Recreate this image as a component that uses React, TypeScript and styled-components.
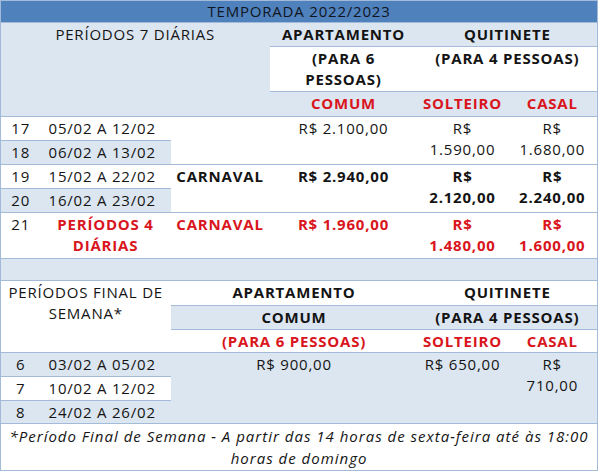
import React from 'react'
import styled, { createGlobalStyle, css } from 'styled-components'

const GlobalStyle = createGlobalStyle`
  html, body {
    margin: 0;
    padding: 0;
    background: #ffffff;
  }
`

const LINE = '#a3bbd8'
const BAND = '#dce6f1'
const TITLE = '#4f81bd'
const RED = '#d9151d'

const Sheet = styled.table`
  border-collapse: collapse;
  table-layout: fixed;
  width: 597px;
  border: 1px solid ${LINE};
  font-family: 'Open Sans', 'Liberation Sans', sans-serif;
  font-size: 15px;
  line-height: 21px;
  letter-spacing: 0.8px;
  color: #141414;
`

const Col = styled.col<{ $w: number }>`
  width: ${({ $w }) => $w}px;
`

const Row = styled.tr<{ $h: number }>`
  height: ${({ $h }) => $h}px;
`

type Fill = 'white' | 'band'

const Cell = styled.td<{
  $fill?: Fill
  $bold?: boolean
  $red?: boolean
  $left?: boolean
  $italic?: boolean
}>`
  box-sizing: border-box;
  padding: 1px 4px 0;
  vertical-align: top;
  white-space: nowrap;
  text-align: ${({ $left }) => ($left ? 'left' : 'center')};
  border-top: 1px solid ${LINE};
  border-bottom: 1px solid ${LINE};
  background: ${({ $fill }) => ($fill === 'band' ? BAND : '#ffffff')};
  font-weight: ${({ $bold }) => ($bold ? 700 : 400)};
  ${({ $red }) => $red && css`color: ${RED};`}
  ${({ $italic }) =>
    $italic &&
    css`
      font-style: italic;
      letter-spacing: 1px;
      line-height: 22px;
    `}
`

const Num = styled(Cell)`
  padding: 1px 0 0;
`

const Dates = styled(Cell).attrs({ $left: true })`
  padding-left: 8px;
`

const Title = styled.td`
  background: ${TITLE};
  text-align: center;
  vertical-align: middle;
  padding: 0;
  color: #101522;
`

const App: React.FC = () => {
  return (
    <>
      <GlobalStyle />
      <Sheet>
        <colgroup>
          <Col $w={40} />
          <Col $w={130} />
          <Col $w={99} />
          <Col $w={148} />
          <Col $w={90} />
          <Col $w={90} />
        </colgroup>
        <tbody>
          <Row $h={22}>
            <Title colSpan={6}>TEMPORADA 2022/2023</Title>
          </Row>

          <Row $h={24}>
            <Cell $fill="band" colSpan={3} rowSpan={3}>PERÍODOS 7 DIÁRIAS</Cell>
            <Cell $fill="band" $bold>APARTAMENTO</Cell>
            <Cell $fill="band" $bold colSpan={2}>QUITINETE</Cell>
          </Row>
          <Row $h={45}>
            <Cell $bold>
              (PARA 6
              <br />
              PESSOAS)
            </Cell>
            <Cell $bold colSpan={2}>(PARA 4 PESSOAS)</Cell>
          </Row>
          <Row $h={25}>
            <Cell $fill="band" $bold $red>COMUM</Cell>
            <Cell $fill="band" $bold $red>SOLTEIRO</Cell>
            <Cell $fill="band" $bold $red>CASAL</Cell>
          </Row>

          <Row $h={24}>
            <Num>17</Num>
            <Dates>05/02 A 12/02</Dates>
            <Cell rowSpan={2} />
            <Cell rowSpan={2}>R$ 2.100,00</Cell>
            <Cell rowSpan={2}>
              R$
              <br />
              1.590,00
            </Cell>
            <Cell rowSpan={2}>
              R$
              <br />
              1.680,00
            </Cell>
          </Row>
          <Row $h={24}>
            <Num $fill="band">18</Num>
            <Dates $fill="band">06/02 A 13/02</Dates>
          </Row>

          <Row $h={24}>
            <Num>19</Num>
            <Dates>15/02 A 22/02</Dates>
            <Cell $bold rowSpan={2}>CARNAVAL</Cell>
            <Cell $bold rowSpan={2}>R$ 2.940,00</Cell>
            <Cell $bold rowSpan={2}>
              R$
              <br />
              2.120,00
            </Cell>
            <Cell $bold rowSpan={2}>
              R$
              <br />
              2.240,00
            </Cell>
          </Row>
          <Row $h={24}>
            <Num $fill="band">20</Num>
            <Dates $fill="band">16/02 A 23/02</Dates>
          </Row>

          <Row $h={46}>
            <Num>21</Num>
            <Cell $bold $red>
              PERÍODOS 4
              <br />
              DIÁRIAS
            </Cell>
            <Cell $bold $red>CARNAVAL</Cell>
            <Cell $bold $red>R$ 1.960,00</Cell>
            <Cell $bold $red>
              R$
              <br />
              1.480,00
            </Cell>
            <Cell $bold $red>
              R$
              <br />
              1.600,00
            </Cell>
          </Row>

          <Row $h={22}>
            <Cell $fill="band" colSpan={6} />
          </Row>

          <Row $h={25}>
            <Cell colSpan={2} rowSpan={3}>
              PERÍODOS FINAL DE
              <br />
              SEMANA*
            </Cell>
            <Cell $bold colSpan={2}>APARTAMENTO</Cell>
            <Cell $bold colSpan={2}>QUITINETE</Cell>
          </Row>
          <Row $h={24}>
            <Cell $fill="band" $bold colSpan={2}>COMUM</Cell>
            <Cell $fill="band" $bold colSpan={2}>(PARA 4 PESSOAS)</Cell>
          </Row>
          <Row $h={23}>
            <Cell $bold $red colSpan={2}>(PARA 6 PESSOAS)</Cell>
            <Cell $bold $red>SOLTEIRO</Cell>
            <Cell $bold $red>CASAL</Cell>
          </Row>

          <Row $h={24}>
            <Num $fill="band">6</Num>
            <Dates $fill="band">03/02 A 05/02</Dates>
            <Cell $fill="band" colSpan={2} rowSpan={3}>R$ 900,00</Cell>
            <Cell $fill="band" rowSpan={3}>R$ 650,00</Cell>
            <Cell $fill="band" rowSpan={3}>
              R$
              <br />
              710,00
            </Cell>
          </Row>
          <Row $h={24}>
            <Num>7</Num>
            <Dates>10/02 A 12/02</Dates>
          </Row>
          <Row $h={23}>
            <Num $fill="band">8</Num>
            <Dates $fill="band">24/02 A 26/02</Dates>
          </Row>

          <Row $h={47}>
            <Cell $italic colSpan={6}>
              *Período Final de Semana - A partir das 14 horas de sexta-feira até às 18:00
              <br />
              horas de domingo
            </Cell>
          </Row>
        </tbody>
      </Sheet>
    </>
  )
}

export default App
